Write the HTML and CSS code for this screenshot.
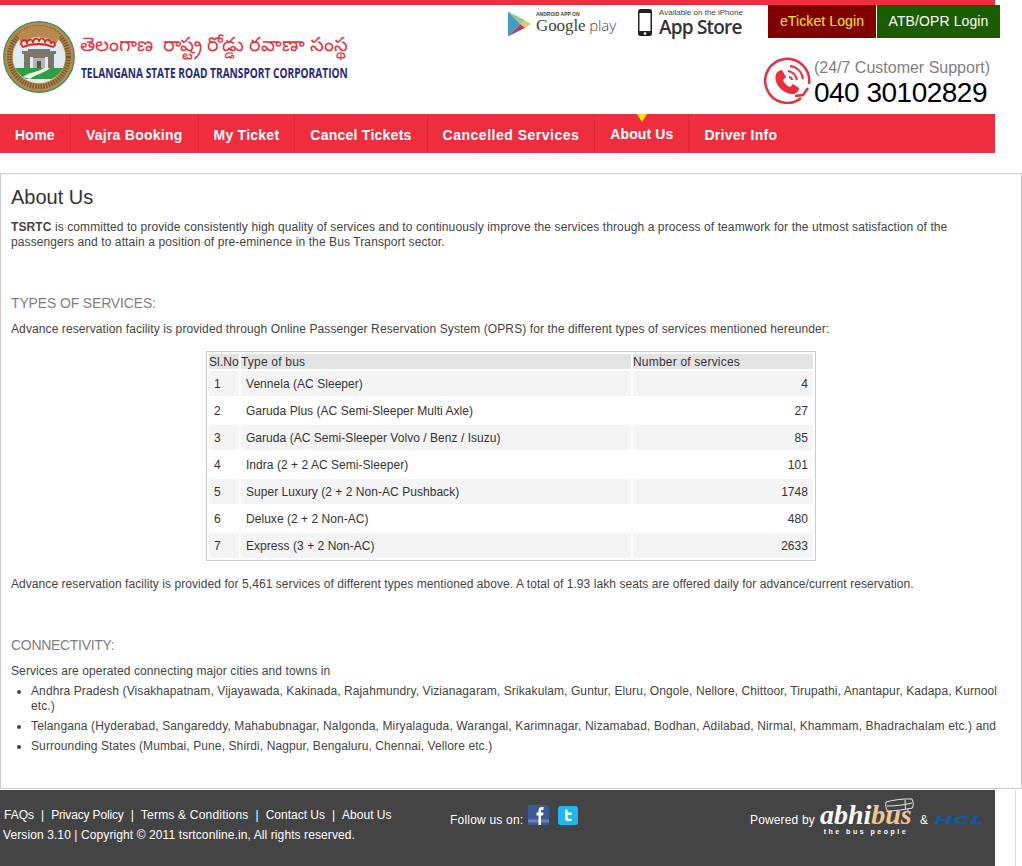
FILE: index.html
```html
<!DOCTYPE html>
<html lang="en">
<head>
<meta charset="utf-8">
<title>About Us</title>
<link rel="stylesheet" href="styles.css">
</head>
<body>
<div class="topbar"></div>
<header class="header">
  <div class="brand">
    <svg class="emblem" width="72" height="72" viewBox="0 0 72 72">
      <circle cx="36" cy="36" r="35.300" fill="#b68a4e" stroke="#2f8f5b" stroke-width="1.200"/>
      <circle cx="36" cy="36" r="29.500" fill="none" stroke="#5d4a2c" stroke-width="5" stroke-dasharray="1.500 1.200" opacity=".75"/>
      <circle cx="36" cy="36" r="25.500" fill="#dcebf4" stroke="#f3e8d0" stroke-width="1.500"/>
      <path d="M14 14a30 30 0 0 1 44 0l-5 9a24 24 0 0 0-34 0z" fill="#b68a4e"/>
      <path d="M18 23c0-5 6-5 6 0 0-5 6-6 6-1 0-5 6-6 6-1 0-5 6-5 6 1 0-5 6-4 6 1 0-3 4-3 4 1l-2 2c-9-4-21-4-30 0z" fill="#f4e7c5" stroke="#d8262c" stroke-width="1.800"/>
      <path d="M19 30h6v-2h22v2h6v3h-2v16h-6V36h-3v13H30V36h-3v13h-6V33h-2z" fill="#7c7668"/>
      <path d="M30 37h12v12H30z" fill="#b5b4aa"/>
      <path d="M34 40h4v9h-4z" fill="#57564e"/>
      <path d="M12 47h48a25.500 25.500 0 0 1-11 11H23a25.500 25.500 0 0 1-11-11z" fill="#2e9e3e"/>
      <path d="M20 56c6-5 16-5 21-9h6c-5 5-16 7-20 11z" fill="#f2f2f2"/>
    </svg>
    <div class="brand-text">
      <div class="brand-te">తెలంగాణ  రాష్ట్ర రోడ్డు రవాణా సంస్థ</div>
      <div class="brand-en">TELANGANA STATE ROAD TRANSPORT CORPORATION</div>
    </div>
  </div>
  <div class="head-right">
    <div class="head-top">
      <div class="store play">
        <svg width="23" height="26" viewBox="0 0 24 26"><path d="M0 0l13 13L0 26z" fill="#3f9fc0"/><path d="M0 0l18 9-5 4z" fill="#9cc98a"/><path d="M0 26l18-9-5-4z" fill="#a8426f"/><path d="M18 9l6 4-6 4-5-4z" fill="#efc75e"/></svg>
        <div class="store-text play-text"><span class="store-small">ANDROID APP ON</span><span class="store-big">Google<span class="light"> play</span></span></div>
      </div>
      <div class="store apple">
        <svg width="14" height="27" viewBox="0 0 14 27"><rect width="14" height="27" rx="2.500" fill="#222"/><rect x="1.500" y="4" width="11" height="18" fill="#fff"/><circle cx="7" cy="24.500" r="1.300" fill="#fff"/></svg>
        <div class="store-text apple-text"><span class="avail">Available on the iPhone</span><span class="appstore">App Store</span></div>
      </div>
      <div class="logins"><a class="login eticket">eTicket Login</a><a class="login atb">ATB/OPR Login</a></div>
    </div>
    <div class="support">
      <svg width="47" height="47" viewBox="0 0 47 47" fill="none" stroke="#ee2d3d"><path d="M37 41A22 22 0 1 1 45 27" stroke-width="2.500"/><path d="M12 17c2-3 4-4 6-4l4 7-3 3c1 3 4 6 7 7l3-3 6 4c0 3-2 5-5 6C20 38 9 27 12 17z" fill="#ee2d3d" stroke="none"/><path d="M24 14c5 1 8 4 9 9M26 9c7 1 12 6 13 13M25 20c2 0 3 2 3 3" stroke-width="2"/><path d="M31 39l8-1 5-7" stroke-width="2.500"/></svg>
      <div class="support-text"><div class="support-label">(24/7 Customer Support)</div><div class="support-phone">040 30102829</div></div>
    </div>
  </div>
</header>
<nav class="nav">
  <a class="nav-item">Home</a>
  <a class="nav-item">Vajra Booking</a>
  <a class="nav-item">My Ticket</a>
  <a class="nav-item">Cancel Tickets</a>
  <a class="nav-item wide">Cancelled Services</a>
  <a class="nav-item active">About Us</a>
  <a class="nav-item last">Driver Info</a>
</nav>
<main class="content">
  <h1>About Us</h1>
  <p class="intro"><b>TSRTC</b> is committed to provide consistently high quality of services and to continuously improve the services through a process of teamwork for the utmost satisfaction of the passengers and to attain a position of pre-eminence in the Bus Transport sector.</p>
  <h2 class="types">TYPES OF SERVICES:</h2>
  <p class="lead">Advance reservation facility is provided through Online Passenger Reservation System (OPRS) for the different types of services mentioned hereunder:</p>
  <div class="table-wrap">
  <table>
    <thead><tr><th class="c1">Sl.No</th><th class="c2">Type of bus</th><th class="c3">Number of services</th></tr></thead>
    <tbody>
      <tr><td class="c1">1</td><td class="c2">Vennela (AC Sleeper)</td><td class="c3">4</td></tr>
      <tr><td class="c1">2</td><td class="c2">Garuda Plus (AC Semi-Sleeper Multi Axle)</td><td class="c3">27</td></tr>
      <tr><td class="c1">3</td><td class="c2">Garuda (AC Semi-Sleeper Volvo / Benz / Isuzu)</td><td class="c3">85</td></tr>
      <tr><td class="c1">4</td><td class="c2">Indra (2 + 2 AC Semi-Sleeper)</td><td class="c3">101</td></tr>
      <tr><td class="c1">5</td><td class="c2">Super Luxury (2 + 2 Non-AC Pushback)</td><td class="c3">1748</td></tr>
      <tr><td class="c1">6</td><td class="c2">Deluxe (2 + 2 Non-AC)</td><td class="c3">480</td></tr>
      <tr><td class="c1">7</td><td class="c2">Express (3 + 2 Non-AC)</td><td class="c3">2633</td></tr>
    </tbody>
  </table>
  </div>
  <p class="after">Advance reservation facility is provided for 5,461 services of different types mentioned above. A total of 1.93 lakh seats are offered daily for advance/current reservation.</p>
  <h2 class="conn">CONNECTIVITY:</h2>
  <p class="lead2">Services are operated connecting major cities and towns in</p>
  <ul>
    <li>Andhra Pradesh (Visakhapatnam, Vijayawada, Kakinada, Rajahmundry, Vizianagaram, Srikakulam, Guntur, Eluru, Ongole, Nellore, Chittoor, Tirupathi, Anantapur, Kadapa, Kurnool etc.)</li>
    <li class="li-wide">Telangana (Hyderabad, Sangareddy, Mahabubnagar, Nalgonda, Miryalaguda, Warangal, Karimnagar, Nizamabad, Bodhan, Adilabad, Nirmal, Khammam, Bhadrachalam etc.) and</li>
    <li>Surrounding States (Mumbai, Pune, Shirdi, Nagpur, Bengaluru, Chennai, Vellore etc.)</li>
  </ul>
</main>
<footer class="footer">
  <div class="foot-left">
    <div class="foot-links"><a>FAQs</a><i>|</i><a class="tight">Privacy Policy</a><i>|</i><a class="loose">Terms &amp; Conditions</a><i>|</i><a>Contact Us</a><i>|</i><a>About Us</a></div>
    <div class="foot-copy">Version 3.10 | Copyright © 2011 tsrtconline.in, All rights reserved.</div>
  </div>
  <div class="follow">
    <span>Follow us on:</span>
    <svg class="fb" width="21" height="20" viewBox="0 0 21 20"><rect width="21" height="20" rx="1.500" fill="#3b5998"/><rect y="14.500" width="21" height="3" fill="#6d83b3"/><path d="M10.500 20V10.500H8.500V7.500h2V5.500c0-2.500 1.500-3.500 3.500-3.500h1.500v3H14c-.7 0-1 .3-1 1v1.500h2.500l-.5 3h-2V20z" fill="#fff"/></svg>
    <svg class="tw" width="20" height="19" viewBox="0 0 20 19"><rect width="20" height="19" rx="2.500" fill="#1fb6f2"/><path d="M7 3.500h2.600v3h4v2.400h-4v2.400c0 1 .6 1.400 1.500 1.400h2.500V15H10C8 15 7 14 7 12z" fill="#fff"/></svg>
  </div>
  <div class="powered">
    <span>Powered by</span>
    <div class="abhi">
      <svg class="bus" width="29" height="15" viewBox="0 0 29 15" fill="none" stroke="#e8e8e8"><path d="M1 4C8 2 18 .5 27 1c1.500 3 1.500 6 .5 9-8 1.500-17 3-25 3C.5 10 .5 7 1 4zM2 8c8 0 17-1 25-3M20 2l.5 9M6 13v1.500M23 11v2"/></svg>
      <div class="abhi-word">abhi<span>bus</span></div>
      <div class="abhi-tag">the bus people</div>
    </div>
    <span class="amp">&amp;</span>
    <span class="hcl">HCL</span>
  </div>
</footer>
</body>
</html>
```
FILE: styles.css
```css
* { box-sizing: border-box; }
html, body { margin: 0; padding: 0; }
body { width: 1022px; height: 866px; overflow: hidden; background: #fff; font-family: "Liberation Sans", Arial, sans-serif; font-size: 12px; letter-spacing: .1px; color: #444; }
a { text-decoration: none; color: inherit; }

.topbar { width: 995px; height: 5px; background: #ef2d3e; }

.header { height: 109px; display: flex; justify-content: space-between; width: 1000px; }
.brand { display: flex; padding: 16px 0 0 3px; align-items: flex-start; }
.brand-text { margin-left: 5px; padding-top: 9px; }
.brand-te { font-family: "Noto Sans", "Noto Sans CJK SC", sans-serif; font-size: 19.600px; letter-spacing: 0; line-height: 27px; color: #e8323c; white-space: pre; height: 27px; }
.brand-en { font-family: "Open Sans", "Liberation Sans", sans-serif; font-weight: 700; font-size: 15px; line-height: 18px; color: #27287f; margin: 6px 0 0 1px; white-space: nowrap; letter-spacing: 0; transform: scaleX(.675); transform-origin: left; width: 268px; }

.head-right { display: flex; flex-direction: column; align-items: flex-end; }
.head-top { display: flex; height: 33px; }
.store { display: flex; align-items: flex-start; color: #444; letter-spacing: 0; }
.play { padding-top: 6px; gap: 5px; margin-right: 22px; }
.apple { padding-top: 4px; gap: 7px; margin-right: 26px; }
.store-text { display: flex; flex-direction: column; white-space: nowrap; }
.play-text { width: 80px; }
.apple-text { width: 83px; }
.store-small { font-size: 5px; font-weight: 700; line-height: 6px; }
.store-big { font-family: "Liberation Serif", serif; font-size: 17px; line-height: 15px; margin-top: 1px; letter-spacing: -.1px; }
.light { font-family: "Open Sans", sans-serif; font-size: 15px; font-weight: 300; }
.avail { font-size: 8px; line-height: 9px; margin-top: -1px; letter-spacing: 0; }
.appstore { font-family: "Open Sans", sans-serif; font-weight: 600; font-size: 19px; line-height: 21px; letter-spacing: -.8px; color: #333; }
.logins { display: flex; gap: 1px; }
.login { height: 33px; line-height: 33px; font-size: 14px; text-align: center; }
.eticket { width: 108px; background: #800000; color: #ffea00; }
.atb { width: 123px; background: #1c5c00; color: #fff; }

.support { display: flex; gap: 3px; margin-top: 19px; padding-right: 10px; }
.support-text { padding-top: 2px; letter-spacing: 0; }
.support-label { font-size: 16px; line-height: 18px; color: #808080; }
.support-phone { font-size: 28px; line-height: 32px; color: #000; letter-spacing: -.5px; }

.nav { width: 995px; height: 39px; background: #ef2d3e; display: flex; }
.nav-item { display: block; padding: 0 15px; height: 39px; line-height: 42px; font-size: 14px; font-weight: 700; color: #fff; letter-spacing: .25px; border-right: 1px solid #dc2433; position: relative; }
.nav-item.wide { letter-spacing: .5px; }
.nav-item.last { border-right: 0; }
.nav-item.active { line-height: 41px; letter-spacing: .12px; }
.nav-item.active::before { content: ""; position: absolute; left: 50%; top: 0; margin-left: -5px; border: 5px solid transparent; border-top: 8px solid #ffe600; border-bottom: 0; }

.content { margin-top: 20px; width: 1022px; height: 616px; border: 1px solid #ccc; padding: 0 10px; }
h1 { font-size: 20px; font-weight: 400; letter-spacing: 0; line-height: 24px; margin: 11px 0 0; color: #333; }
p { margin: 0; line-height: 15px; }
.intro { margin-top: 11px; padding-right: 30px; }
h2 { font-size: 14px; font-weight: 400; color: #808080; line-height: 15px; margin: 0; }
.types { margin-top: 46px; letter-spacing: -.15px; }
.lead { margin-top: 11px; }
.table-wrap { width: 610px; margin: 14px 0 0 195px; border: 1px solid #ccc; }
table { width: 100%; border-collapse: separate; border-spacing: 2px; table-layout: fixed; }
th, td { font-weight: 400; font-size: 12px; color: #333; }
th { padding: 2px 0 0; background: #e3e3e3; height: 15px; line-height: 13px; text-align: left; white-space: nowrap; letter-spacing: .2px; }
th.c1 { letter-spacing: .1px; }
td { height: 25px; padding: 0 5px; letter-spacing: .04px; }
tbody tr:nth-child(odd) td { background: #f4f4f4; }
.c1 { width: 30px; }
.c3 { width: 180px; }
td.c3 { text-align: right; }
.after { margin-top: 16px; letter-spacing: .065px; }
.conn { margin-top: 46px; letter-spacing: -.3px; }
.lead2 { margin-top: 11px; }
ul { margin: 5px 0 0; padding: 0 0 0 20px; }
li { line-height: 15px; margin-bottom: 5px; }
.li-wide { letter-spacing: .14px; }

.footer { width: 995px; height: 76px; background: #444; color: #fff; margin-top: 1px; position: relative; display: flex; padding-top: 18px; }
.footer::after { content: ""; position: absolute; left: 1015px; top: 0; bottom: 0; width: 1px; background: #ddd; }
.foot-left { width: 450px; padding-left: 3px; }
.foot-links { line-height: 15px; padding-left: 1px; letter-spacing: 0; }
.foot-links a { display: inline-block; }
.foot-links .tight { letter-spacing: -.15px; }
.foot-links .loose { letter-spacing: .2px; }
.foot-links i { font-style: normal; margin: 0 7px; }
.foot-copy { margin-top: 5px; line-height: 15px; }
.follow { display: flex; align-items: flex-start; width: 300px; letter-spacing: .2px; }
.follow span { margin-top: 5px; line-height: 15px; }
.fb { margin-left: 5px; margin-top: -3px; }
.tw { margin-left: 9px; margin-top: -2px; }
.powered { display: flex; align-items: flex-start; letter-spacing: .15px; }
.powered > span { margin-top: 5px; line-height: 15px; }
.abhi { position: relative; width: 92px; margin-left: 5px; margin-top: -3px; height: 36px; }
.abhi-word { font-family: "Liberation Serif", serif; font-style: italic; font-weight: 700; font-size: 28px; line-height: 20px; color: #fff; letter-spacing: 0; white-space: nowrap; }
.abhi-word span { color: #f2c48d; }
.abhi-tag { font-size: 7px; font-weight: 700; letter-spacing: 2.500px; text-align: center; line-height: 9px; white-space: nowrap; margin-top: 2px; }
.bus { position: absolute; right: -2px; top: -7px; }
.amp { margin-left: 8px; }
.hcl { margin-left: 6px; font-family: "DejaVu Sans", sans-serif; font-style: italic; font-weight: 700; color: #0c5cac; font-size: 11px; letter-spacing: 0; transform: scaleX(2.100); transform-origin: left; }
```
